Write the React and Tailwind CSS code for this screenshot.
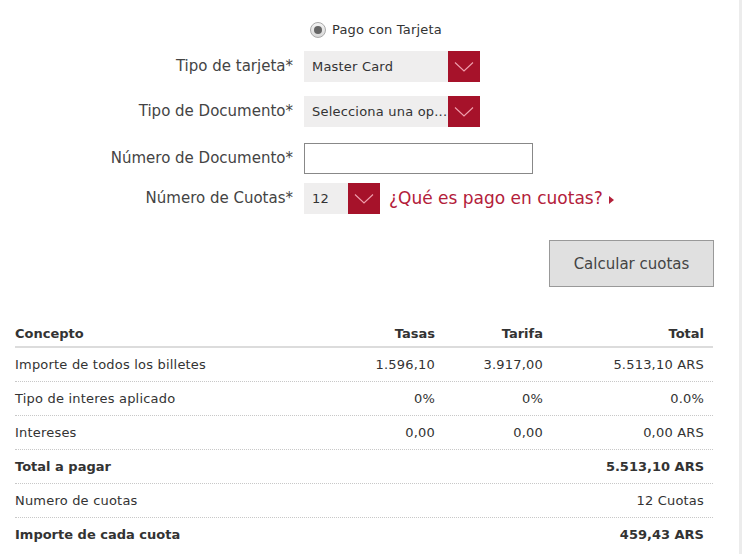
import { useState } from 'react'

const Chevron = () => (
  <svg width="20" height="12" viewBox="0 0 20 12" fill="none">
    <path d="M1 1.5 L10 10 L19 1.5" stroke="#f0a0ae" strokeWidth="1.1" />
  </svg>
)

// Select with red arrow button
const Select = ({ value, width }) => (
  <div className={`flex h-[31px] ${width}`}>
    <div className="flex-1 bg-[#efeeee] flex items-center pl-2 text-[13px] text-[#333] truncate tracking-[0.2px]">{value}</div>
    <div className="w-[32px] bg-[#a6122a] flex items-center justify-center">
      <Chevron />
    </div>
  </div>
)

const Row = ({ label, children, className }) => (
  <div className={`flex items-center ${className}`}>
    <div className="w-[293px] text-right text-[15px] text-[#444]">{label}</div>
    <div className="ml-[11px] flex items-center">{children}</div>
  </div>
)

const rows = [
  { c: 'Importe de todos los billetes', t: '1.596,10', f: '3.917,00', total: '5.513,10 ARS' },
  { c: 'Tipo de interes aplicado', t: '0%', f: '0%', total: '0.0%' },
  { c: 'Intereses', t: '0,00', f: '0,00', total: '0,00 ARS' },
  { c: 'Total a pagar', t: '', f: '', total: '5.513,10 ARS', bold: true },
  { c: 'Numero de cuotas', t: '', f: '', total: '12 Cuotas' },
  { c: 'Importe de cada cuota', t: '', f: '', total: '459,43 ARS', bold: true, last: true },
]

export default function App() {
  const [doc, setDoc] = useState('')

  return (
    <div className="w-[742px] h-[554px] bg-white border-r-[3px] border-[#ececec] overflow-hidden font-['DejaVu_Sans',Verdana,sans-serif]">
      {/* Radio */}
      <div className="flex items-center h-[29px] pt-[11px] ml-[310px] mt-[10px]">
        <span className="w-[16px] h-[16px] rounded-full border border-[#aaa] bg-gradient-to-b from-[#f4f4f4] to-[#d8d8d8] flex items-center justify-center">
          <span className="w-[8px] h-[8px] rounded-full bg-[#666]"></span>
        </span>
        <span className="ml-[6px] text-[13px] text-[#333] tracking-[0.2px]">Pago con Tarjeta</span>
      </div>

      <Row label="Tipo de tarjeta*" className="mt-[12px]">
        <Select value="Master Card" width="w-[176px]" />
      </Row>
      <Row label="Tipo de Documento*" className="mt-[14px]">
        <Select value="Selecciona una op..." width="w-[176px]" />
      </Row>
      <Row label="Número de Documento*" className="mt-[16px]">
        <input
          value={doc}
          onChange={e => setDoc(e.target.value)}
          className="w-[229px] h-[31px] border border-[#888] bg-white outline-none px-2 text-[13px]"
        />
      </Row>
      <Row label="Número de Cuotas*" className="mt-[9px]">
        <Select value="12" width="w-[76px]" />
        <a className="ml-[9px] text-[17px] text-[#b3203a] flex items-center">
          ¿Qué es pago en cuotas?
          <svg width="5" height="8" viewBox="0 0 5 8" className="ml-[6px] mt-[2px]">
            <path d="M0 0 L5 4 L0 8 Z" fill="#b3203a" />
          </svg>
        </a>
      </Row>

      <div className="flex justify-end pr-[25px] mt-[26px]">
        <button className="w-[165px] h-[47px] pt-[1px] bg-[#e0e0e0] border border-[#999] text-[15px] text-[#444]">
          Calcular cuotas
        </button>
      </div>

      {/* Tabla */}
      <div className="ml-[15px] w-[698px] mt-[35px] text-[13px] text-[#333]">
        <div className="grid grid-cols-[330px_90px_108px_1fr] h-[26px] items-center font-bold border-b-2 border-[#dcdcdc]">
          <div>Concepto</div>
          <div className="text-right">Tasas</div>
          <div className="text-right">Tarifa</div>
          <div className="text-right pr-[9px]">Total</div>
        </div>
        {rows.map(r => (
          <div
            key={r.c}
            className={`grid grid-cols-[330px_90px_108px_1fr] h-[34px] items-center ${r.last ? '' : 'border-b border-dotted border-[#c8c8c8]'} ${r.bold ? 'font-bold' : 'tracking-[0.2px]'}`}
          >
            <div>{r.c}</div>
            <div className="text-right">{r.t}</div>
            <div className="text-right">{r.f}</div>
            <div className="text-right pr-[9px]">{r.total}</div>
          </div>
        ))}
      </div>
    </div>
  )
}
